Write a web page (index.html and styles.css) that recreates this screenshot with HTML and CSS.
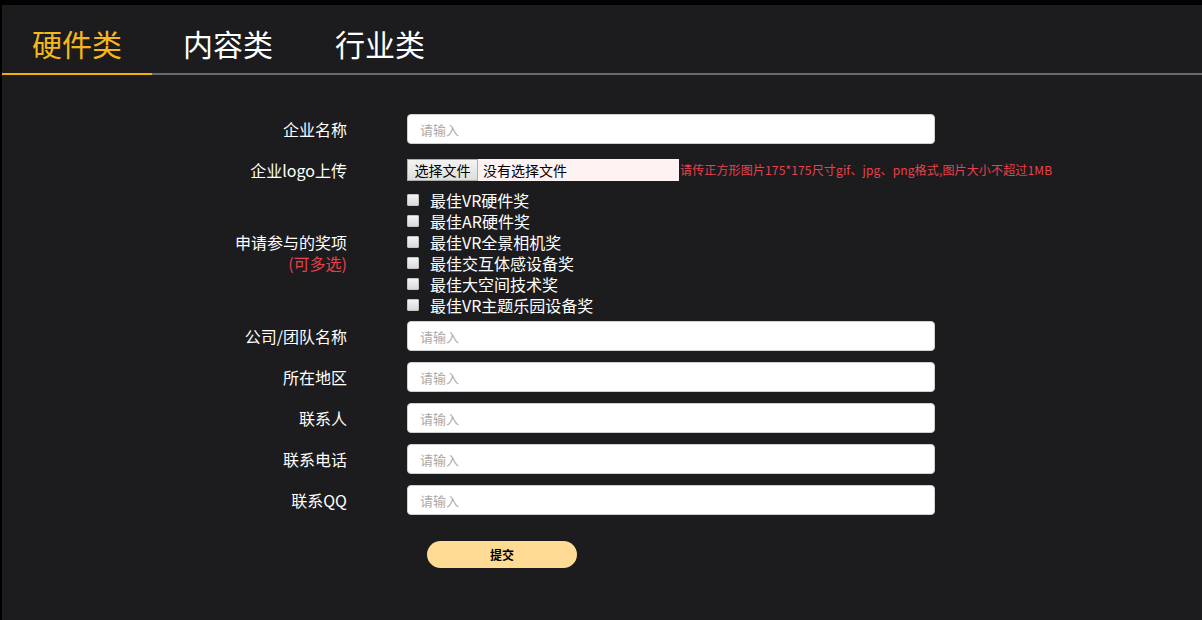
FILE: index.html
```html
<!DOCTYPE html>
<html lang="zh-CN">
<head>
<meta charset="utf-8">
<title>报名</title>
<link rel="stylesheet" href="styles.css">
</head>
<body>
<div class="page">
  <div class="tabs">
    <div class="tab active">硬件类</div>
    <div class="tab">内容类</div>
    <div class="tab">行业类</div>
  </div>
  <form class="form">
    <div class="row">
      <label class="label">企业名称</label>
      <input class="field" type="text" placeholder="请输入">
    </div>
    <div class="row row-file">
      <label class="label">企业logo上传</label>
      <div class="file">
        <span class="file-btn">选择文件</span>
        <span class="file-name">没有选择文件</span>
      </div>
      <span class="hint">请传正方形图片175*175尺寸gif、jpg、png格式,图片大小不超过1MB</span>
    </div>
    <div class="row row-checks">
      <label class="label"><span class="line">申请参与的奖项</span><span class="line multi">(可多选)</span></label>
      <div class="checks">
        <label class="check"><input type="checkbox"><span>最佳VR硬件奖</span></label>
        <label class="check"><input type="checkbox"><span>最佳AR硬件奖</span></label>
        <label class="check"><input type="checkbox"><span>最佳VR全景相机奖</span></label>
        <label class="check"><input type="checkbox"><span>最佳交互体感设备奖</span></label>
        <label class="check"><input type="checkbox"><span>最佳大空间技术奖</span></label>
        <label class="check"><input type="checkbox"><span>最佳VR主题乐园设备奖</span></label>
      </div>
    </div>
    <div class="row">
      <label class="label">公司/团队名称</label>
      <input class="field" type="text" placeholder="请输入">
    </div>
    <div class="row">
      <label class="label">所在地区</label>
      <input class="field" type="text" placeholder="请输入">
    </div>
    <div class="row">
      <label class="label">联系人</label>
      <input class="field" type="text" placeholder="请输入">
    </div>
    <div class="row">
      <label class="label">联系电话</label>
      <input class="field" type="text" placeholder="请输入">
    </div>
    <div class="row">
      <label class="label">联系QQ</label>
      <input class="field" type="text" placeholder="请输入">
    </div>
    <div class="submit-row">
      <button class="submit" type="button">提交</button>
    </div>
  </form>
</div>
</body>
</html>
```
FILE: styles.css
```css
html, body {
  margin: 0;
  padding: 0;
  background: #000;
  height: 100%;
}
body {
  font-family: "Noto Sans CJK SC", "Microsoft YaHei", sans-serif;
  color: #fff;
  padding-top: 5px;
  padding-left: 2px;
  box-sizing: border-box;
}
.page {
  background: #1c1c1e;
  min-height: 615px;
}
.tabs {
  display: flex;
  border-bottom: 2px solid #6b6b6b;
}
.tab {
  width: 152px;
  text-align: center;
  font-size: 30px;
  line-height: 40px;
  padding: 18px 0 10px;
  color: #fff;
  box-sizing: border-box;
}
.tab.active {
  width: 150px;
  color: #f5b81c;
  border-bottom: 2px solid #f0b400;
  margin-bottom: -2px;
  height: 70px;
}
.form {
  padding-top: 39px;
}
.row {
  display: flex;
  align-items: center;
  margin-bottom: 11px;
  min-height: 30px;
}
.label {
  width: 345px;
  margin-right: 60px;
  text-align: right;
  font-size: 16px;
  line-height: 21px;
  color: #fff;
}
.line {
  display: block;
}
.multi {
  color: #e8414e;
}
.field {
  width: 528px;
  height: 30px;
  box-sizing: border-box;
  border: 1px solid #cfcfcf;
  border-radius: 4px;
  background: #fff;
  padding: 0 12px;
  font-family: inherit;
  font-size: 13px;
  color: #333;
  outline: none;
}
.field::placeholder {
  color: #a9a9a9;
}
.row-file {
  margin-bottom: 5px;
}
.file {
  display: flex;
  width: 272px;
  height: 22px;
  background: #fff2f2;
}
.file-btn {
  box-sizing: border-box;
  height: 22px;
  width: 71px;
  padding: 0 6px;
  font-size: 14px;
  line-height: 20px;
  color: #000;
  border: 1px solid #adadad;
  background: linear-gradient(#f3f3f3, #dedede);
  text-align: center;
}
.file-name {
  font-size: 14px;
  line-height: 22px;
  color: #000;
  padding-left: 5px;
}
.hint {
  font-size: 12px;
  letter-spacing: 0.15px;
  color: #e8414e;
  margin-left: 1px;
  line-height: 22px;
}
.row-checks {
  margin-bottom: 5px;
}
.checks {
  display: flex;
  flex-direction: column;
}
.check {
  display: flex;
  align-items: center;
  height: 21px;
  font-size: 16px;
  line-height: 21px;
  color: #fff;
}
.check input {
  appearance: none;
  -webkit-appearance: none;
  width: 12px;
  height: 12px;
  margin: -2px 11px 0 0;
  border: 1px solid #c4c4c4;
  border-radius: 1px;
  background: linear-gradient(#f4f4f4, #d9d9d9);
  box-sizing: border-box;
}
.submit-row {
  padding-left: 425px;
  padding-top: 15px;
}
.submit {
  width: 150px;
  height: 27px;
  border: none;
  border-radius: 14px;
  background: #ffdb94;
  color: #000;
  font-family: inherit;
  font-size: 12px;
  font-weight: bold;
  cursor: pointer;
}
```
